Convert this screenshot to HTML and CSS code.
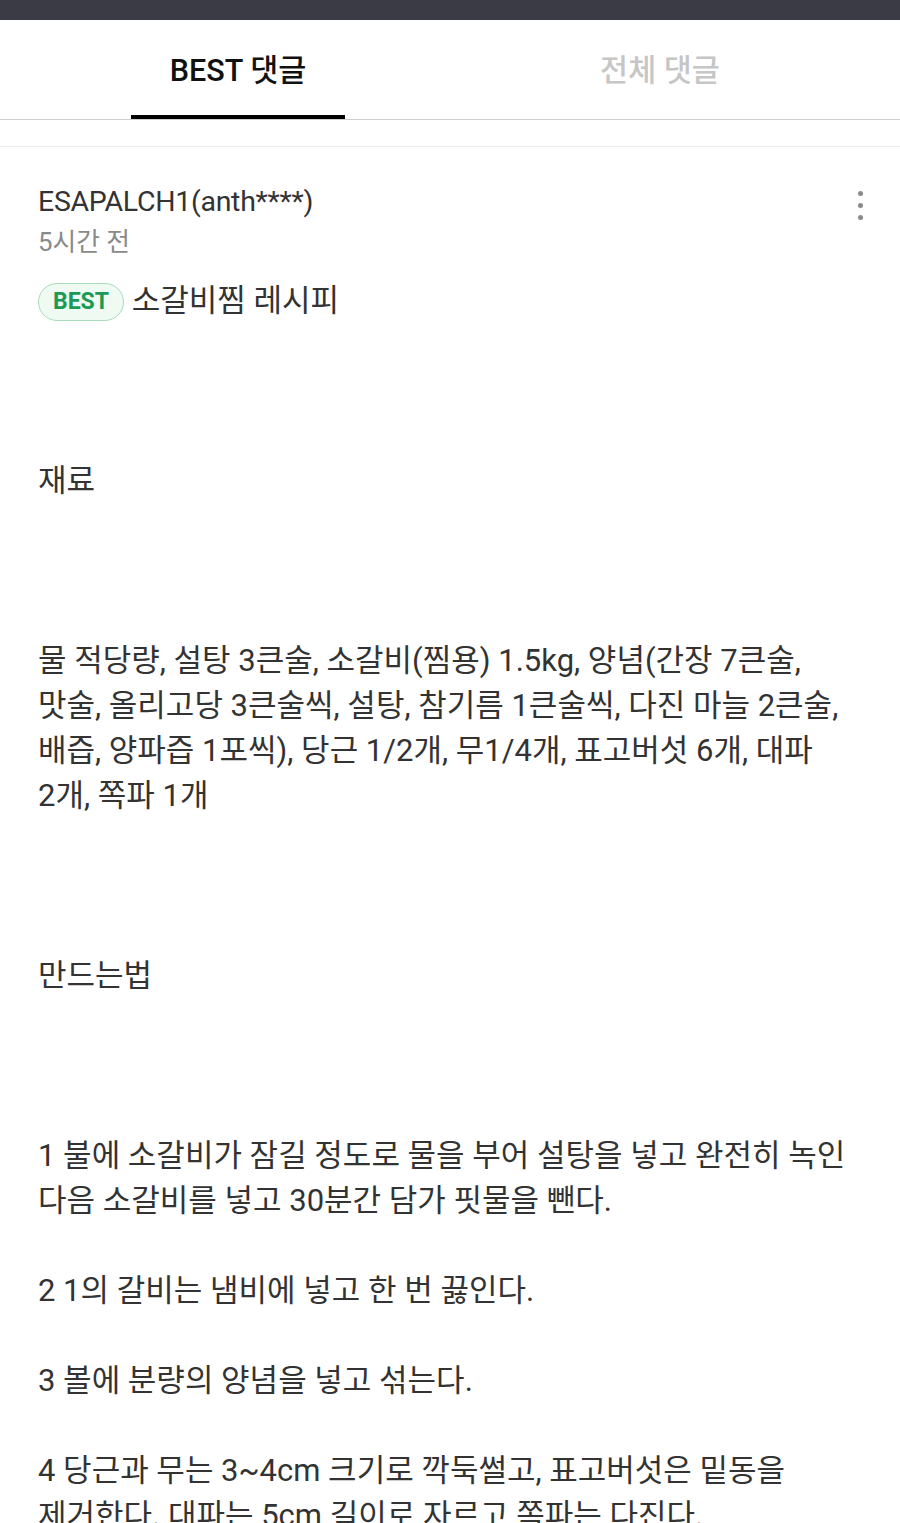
FILE: index.html
```html
<!DOCTYPE html>
<html lang="ko">
<head>
<meta charset="utf-8">
<title>BEST 댓글</title>
<link rel="stylesheet" href="styles.css">
</head>
<body>
<div class="statusbar"></div>
<nav class="tabs">
  <div class="tab active"><span class="tab-label">BEST 댓글</span><span class="tab-bar"></span></div>
  <div class="tab"><span class="tab-label">전체 댓글</span></div>
</nav>
<div class="spacer"></div>
<section class="comment">
  <div class="comment-head">
    <div class="meta">
      <div class="user">ESAPALCH1(anth****)</div>
      <div class="time">5시간 전</div>
    </div>
    <div class="kebab"><span></span><span></span><span></span></div>
  </div>
  <div class="body">
    <p class="gap3"><span class="badge">BEST</span> 소갈비찜 레시피</p>
    <p class="gap3">재료</p>
    <p class="gap3">물 적당량, 설탕 3큰술, 소갈비(찜용) 1.5kg, 양념(간장 7큰술, 맛술, 올리고당 3큰술씩, 설탕, 참기름 1큰술씩, 다진 마늘 2큰술, 배즙, 양파즙 1포씩), 당근 1/2개, 무1/4개, 표고버섯 6개, 대파 2개, 쪽파 1개</p>
    <p class="gap3">만드는법</p>
    <p class="gap1">1 불에 소갈비가 잠길 정도로 물을 부어 설탕을 넣고 완전히 녹인 다음 소갈비를 넣고 30분간 담가 핏물을 뺀다.</p>
    <p class="gap1">2 1의 갈비는 냄비에 넣고 한 번 끓인다.</p>
    <p class="gap1">3 볼에 분량의 양념을 넣고 섞는다.</p>
    <p class="gap1">4 당근과 무는 3~4cm 크기로 깍둑썰고, 표고버섯은 밑동을 제거한다. 대파는 5cm 길이로 자르고 쪽파는 다진다.</p>
  </div>
</section>
</body>
</html>
```

FILE: styles.css
```css
* { box-sizing: border-box; }
html, body { margin: 0; padding: 0; background: #fff; }
body {
  font-family: Roboto, "Noto Sans CJK KR", sans-serif;
  color: #333;
  width: 900px;
  height: 1523px;
  overflow: hidden;
}
.statusbar { height: 20px; background: #3a3b45; }
.tabs {
  display: flex;
  height: 100px;
  padding: 0 29px 0 27px;
  border-bottom: 1px solid #cfcfcf;
}
.tab {
  flex: 1;
  display: flex;
  flex-direction: column;
  align-items: center;
  padding-top: 32px;
}
.tab-label {
  font-size: 30.5px;
  line-height: 38px;
  font-weight: 500;
  color: #c6c6c6;
}
.tab.active .tab-label { color: #111; }
.tab-bar {
  margin-top: auto;
  width: 214px;
  height: 4px;
  background: #000;
}
.spacer { height: 27px; border-bottom: 1px solid #ececec; }
.comment { padding: 35px 38px 0 38px; }
.comment-head { display: flex; justify-content: space-between; }
.user { font-size: 28.5px; line-height: 40px; color: #333; letter-spacing: -0.3px; }
.time { font-size: 25.8px; line-height: 38px; color: #8a8a8a; margin-top: 1px; }
.kebab {
  display: flex;
  flex-direction: column;
  gap: 7px;
  padding-top: 9px;
  margin-right: -1px;
}
.kebab span { width: 5px; height: 5px; border-radius: 50%; background: #8a8a8a; }
.body {
  margin-top: 17px;
  font-size: 31px;
  line-height: 45px;
  color: #333;
  word-break: keep-all;
}
.body p { margin: 0; }
.body .gap3 { margin-bottom: 135px; }
.body .gap1 { margin-bottom: 45px; }
.badge {
  display: inline-block;
  width: 86px;
  height: 38px;
  line-height: 36px;
  border: 1px solid #a9dcbd;
  border-radius: 19px;
  background: #eefaf2;
  color: #1b9a55;
  font-size: 23px;
  font-weight: 700;
  text-align: center;
  vertical-align: 2px;
  margin-right: 0;
}
```
